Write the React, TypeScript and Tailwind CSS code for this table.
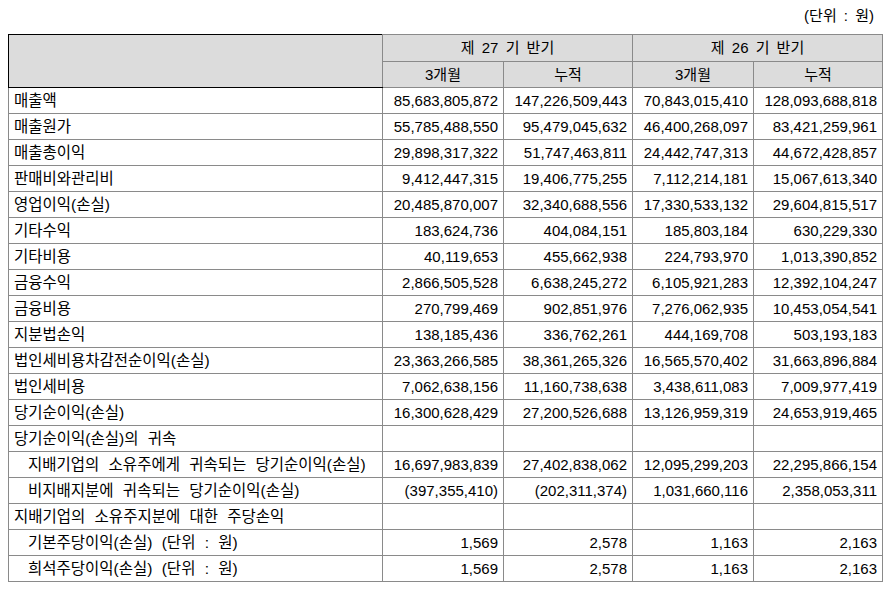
type Row = { label: string; indent?: boolean; values?: [string, string, string, string] };

const rows: Row[] = [
  { label: '매출액', values: ['85,683,805,872', '147,226,509,443', '70,843,015,410', '128,093,688,818'] },
  { label: '매출원가', values: ['55,785,488,550', '95,479,045,632', '46,400,268,097', '83,421,259,961'] },
  { label: '매출총이익', values: ['29,898,317,322', '51,747,463,811', '24,442,747,313', '44,672,428,857'] },
  { label: '판매비와관리비', values: ['9,412,447,315', '19,406,775,255', '7,112,214,181', '15,067,613,340'] },
  { label: '영업이익(손실)', values: ['20,485,870,007', '32,340,688,556', '17,330,533,132', '29,604,815,517'] },
  { label: '기타수익', values: ['183,624,736', '404,084,151', '185,803,184', '630,229,330'] },
  { label: '기타비용', values: ['40,119,653', '455,662,938', '224,793,970', '1,013,390,852'] },
  { label: '금융수익', values: ['2,866,505,528', '6,638,245,272', '6,105,921,283', '12,392,104,247'] },
  { label: '금융비용', values: ['270,799,469', '902,851,976', '7,276,062,935', '10,453,054,541'] },
  { label: '지분법손익', values: ['138,185,436', '336,762,261', '444,169,708', '503,193,183'] },
  { label: '법인세비용차감전순이익(손실)', values: ['23,363,266,585', '38,361,265,326', '16,565,570,402', '31,663,896,884'] },
  { label: '법인세비용', values: ['7,062,638,156', '11,160,738,638', '3,438,611,083', '7,009,977,419'] },
  { label: '당기순이익(손실)', values: ['16,300,628,429', '27,200,526,688', '13,126,959,319', '24,653,919,465'] },
  { label: '당기순이익(손실)의 귀속' },
  { label: '지배기업의 소유주에게 귀속되는 당기순이익(손실)', indent: true, values: ['16,697,983,839', '27,402,838,062', '12,095,299,203', '22,295,866,154'] },
  { label: '비지배지분에 귀속되는 당기순이익(손실)', indent: true, values: ['(397,355,410)', '(202,311,374)', '1,031,660,116', '2,358,053,311'] },
  { label: '지배기업의 소유주지분에 대한 주당손익' },
  { label: '기본주당이익(손실) (단위 : 원)', indent: true, values: ['1,569', '2,578', '1,163', '2,163'] },
  { label: '희석주당이익(손실) (단위 : 원)', indent: true, values: ['1,569', '2,578', '1,163', '2,163'] },
];

const cell = 'border border-[#8a8a8a] px-[5px] py-0 h-[26px] align-middle';

export default function App() {
  return (
    <div className="w-[891px] h-[592px] bg-white text-black text-[15px] leading-[20px] [word-spacing:3px] font-['Liberation_Sans','Noto_Sans_CJK_KR',sans-serif]">
      <div className="h-[34px] pt-[6px] pr-[17px] text-right">(단위 : 원)</div>
      <table className="ml-[8px] w-[874px] table-fixed border-collapse border border-black">
        <colgroup>
          <col className="w-[374px]" />
          <col className="w-[121px]" />
          <col className="w-[129px]" />
          <col className="w-[121px]" />
          <col className="w-[129px]" />
        </colgroup>
        <thead className="bg-[#dcdcdc]">
          <tr>
            <th rowSpan={2} className="border border-black border-r-[#8a8a8a] font-normal" />
            <th colSpan={2} className={`${cell} h-[27px] text-center font-normal`}>제 27 기 반기</th>
            <th colSpan={2} className={`${cell} h-[27px] text-center font-normal`}>제 26 기 반기</th>
          </tr>
          <tr>
            <th className={`${cell} text-center font-normal`}>3개월</th>
            <th className={`${cell} text-center font-normal`}>누적</th>
            <th className={`${cell} text-center font-normal`}>3개월</th>
            <th className={`${cell} text-center font-normal`}>누적</th>
          </tr>
        </thead>
        <tbody>
          {rows.map((r) => (
            <tr key={r.label}>
              <td
                className={`${cell} whitespace-nowrap text-[15.5px] [word-spacing:5px] ${r.indent ? 'pl-[19px]' : ''}`}
              >
                {r.label}
              </td>
              {[0, 1, 2, 3].map((i) => (
                <td key={i} className={`${cell} text-right whitespace-nowrap`}>
                  {r.values ? r.values[i] : ''}
                </td>
              ))}
            </tr>
          ))}
        </tbody>
      </table>
    </div>
  );
}
